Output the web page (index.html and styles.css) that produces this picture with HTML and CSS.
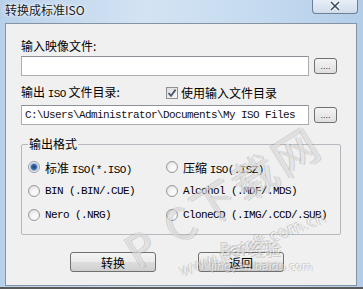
FILE: index.html
```html
<!DOCTYPE html>
<html lang="zh-CN">
<head>
  <meta charset="UTF-8">
  <title>转换成标准ISO</title>
  <link rel="stylesheet" href="styles.css">
</head>
<body>

  <div class="window">
    <div class="titlebar">
      <span class="title">转换成标准ISO</span>
      <button class="close">
        <svg width="12" height="10" viewBox="0 0 12 10"><path d="M2 1 L10 9 M10 1 L2 9" stroke="#fff" stroke-width="3.4"/><path d="M2 1 L10 9 M10 1 L2 9" stroke="#3c4a5c" stroke-width="1.6"/></svg>
      </button>
    </div>

    <div class="client">
      <div class="label">输入映像文件:</div>
      <div class="field-row">
        <div class="input"></div>
        <button class="browse">....</button>
      </div>

      <div class="label-row">
        <span class="label-out">输出 <span class="mono">ISO</span> 文件目录:</span>
        <span class="check-item">
          <span class="checkbox">
            <svg width="10" height="10" viewBox="0 0 10 10"><path d="M1.5 5 L4 7.8 L8.6 1.6" fill="none" stroke="#4a5a72" stroke-width="1.8"/></svg>
          </span>
          使用输入文件目录
        </span>
      </div>
      <div class="field-row second">
        <div class="input mono path">C:\Users\Administrator\Documents\My ISO Files</div>
        <button class="browse">....</button>
      </div>

      <div class="group">
        <span class="legend">输出格式</span>
        <div class="radio-grid">
          <div class="radio-item"><span class="radio checked"></span><span>标准 <span class="mono">ISO(*.ISO)</span></span></div>
          <div class="radio-item"><span class="radio"></span><span>压缩 <span class="mono">ISO(.ISZ)</span></span></div>
          <div class="radio-item"><span class="radio"></span><span class="mono">BIN (.BIN/.CUE)</span></div>
          <div class="radio-item"><span class="radio"></span><span class="mono">Alcohol (.MDF/.MDS)</span></div>
          <div class="radio-item"><span class="radio"></span><span class="mono">Nero (.NRG)</span></div>
          <div class="radio-item"><span class="radio"></span><span class="mono">CloneCD (.IMG/.CCD/.SUB)</span></div>
        </div>
      </div>

      <div class="buttons">
        <button class="btn">转换</button>
        <button class="btn">返回</button>
      </div>

      <!-- watermark over the dialog -->
      <div class="wm wm-pc">P C下载网</div>
      <div class="wm wm-url">www.pcsoft.com.cn</div>
      <div class="wm wm-bai">Bai 经验</div>
      <div class="wm wm-jy">jingyan.baidu.com</div>
    </div>
  </div>

</body>
</html>
```

FILE: styles.css
```css
body {
  margin: 0;
  width: 363px;
  height: 289px;
  overflow: hidden;
  font-family: "Noto Sans CJK SC", sans-serif;
  font-size: 12px;
  color: #000;
  background: linear-gradient(90deg, #b8d0ea 0%, #d3e3f4 40%, #c6dbf0 70%, #b3cde9 100%);
}
.window {
  height: 287px;
  border-bottom: 2px solid #5a5a5a;
}
.titlebar {
  height: 23px;
  display: flex;
  justify-content: space-between;
  align-items: flex-start;
}
.title {
  padding: 2px 0 0 5px;
  line-height: 16px;
  color: #1a1a1a;
  text-shadow: 0 0 6px #fff, 0 0 3px #fff;
}
.close {
  margin: -1px 5px 0 0;
  width: 46px;
  height: 15px;
  padding: 0;
  display: flex;
  align-items: center;
  justify-content: center;
  border: 1px solid #6f8093;
  border-top: none;
  border-radius: 0 0 4px 4px;
  background: linear-gradient(#e9f0f8, #cfdced);
}
.client {
  position: relative;
  overflow: hidden;
  margin: 0 6px 0 5px;
  height: 263px;
  box-sizing: border-box;
  padding: 14px 0 0 15px;
  border: 1px solid #8593a3;
  background: #f0f0f0;
}
.mono {
  font-family: "Liberation Mono", monospace;
  font-size: 11px;
  letter-spacing: -0.6px;
}
.label {
  line-height: 16px;
}
.field-row {
  margin-top: 2px;
  display: flex;
  align-items: center;
  gap: 5px;
}
.field-row.second {
  margin-top: 3px;
}
.input {
  width: 288px;
  height: 20px;
  box-sizing: border-box;
  border: 1px solid #abadb3;
  border-top-color: #8e9097;
  background: #fff;
}
.path {
  padding-left: 3px;
  line-height: 18px;
  color: #111;
}
.browse {
  width: 23px;
  height: 16px;
  padding: 0;
  font-size: 9px;
  line-height: 10px;
  letter-spacing: 0;
  color: #333;
  border: 1px solid #707070;
  border-radius: 3px;
  background: linear-gradient(#f4f4f4, #dedede);
}
.label-row {
  margin-top: 8px;
  display: flex;
  align-items: center;
  line-height: 16px;
}
.label-out {
  width: 145px;
}
.check-item {
  display: flex;
  align-items: center;
  gap: 3px;
}
.checkbox {
  width: 12px;
  height: 12px;
  box-sizing: border-box;
  display: flex;
  align-items: center;
  justify-content: center;
  border: 1px solid #8f8f8f;
  background: linear-gradient(135deg, #dcdcdc, #fafafa);
}
.group {
  position: relative;
  margin-top: 19px;
  width: 320px;
  height: 91px;
  box-sizing: border-box;
  border: 1px solid #b5b9bf;
  border-radius: 2px;
  padding: 10px 0 0 6px;
}
.legend {
  position: absolute;
  top: -9px;
  left: 6px;
  padding: 0 1px;
  line-height: 16px;
  background: #f0f0f0;
}
.radio-grid {
  display: grid;
  grid-template-columns: 138px 1fr;
  grid-auto-rows: 24px;
}
.radio-item {
  display: flex;
  align-items: center;
  gap: 5px;
  white-space: nowrap;
}
.radio {
  width: 12px;
  height: 12px;
  box-sizing: border-box;
  border-radius: 50%;
  border: 1px solid #9a9a9a;
  background: radial-gradient(circle at 60% 65%, #f8f8f8 30%, #d6d6d6 100%);
}
.radio.checked {
  background: radial-gradient(circle, #1e3e6a 0, #3d6aa8 2.5px, #8db2e0 3.5px, #f2f2f2 4.5px, #dcdcdc 100%);
}
.buttons {
  margin-top: 17px;
  padding-left: 49px;
  display: flex;
  gap: 42px;
}
.btn {
  width: 86px;
  height: 20px;
  padding: 0;
  font-family: "Noto Sans CJK SC", sans-serif;
  font-size: 12px;
  border: 1px solid #707070;
  border-radius: 3px;
  background: linear-gradient(#f3f3f3 0%, #ebebeb 50%, #dddddd 51%, #cfcfcf 100%);
}
.wm {
  position: absolute;
  color: rgba(255, 255, 255, 0.5);
  font-family: "DejaVu Sans", sans-serif;
  text-shadow: -1px -1px 0 rgba(110, 110, 110, 0.25), 1px 1px 0 rgba(110, 110, 110, 0.25);
  white-space: nowrap;
  pointer-events: none;
  transform-origin: 0 50%;
}
.wm-pc {
  left: 122px;
  top: 208px;
  font-size: 44px;
  line-height: 44px;
  letter-spacing: 4px;
  font-family: "Noto Sans CJK SC", sans-serif;
  transform: rotate(-32deg);
}
.wm-url {
  left: 174px;
  top: 240px;
  font-size: 16px;
  line-height: 16px;
  transform: rotate(-21deg);
}
.wm-bai {
  left: 214px;
  top: 212px;
  font-size: 16px;
  font-weight: bold;
  font-family: "Noto Sans CJK SC", sans-serif;
}
.wm-jy {
  left: 205px;
  top: 236px;
  font-size: 11px;
}
```
